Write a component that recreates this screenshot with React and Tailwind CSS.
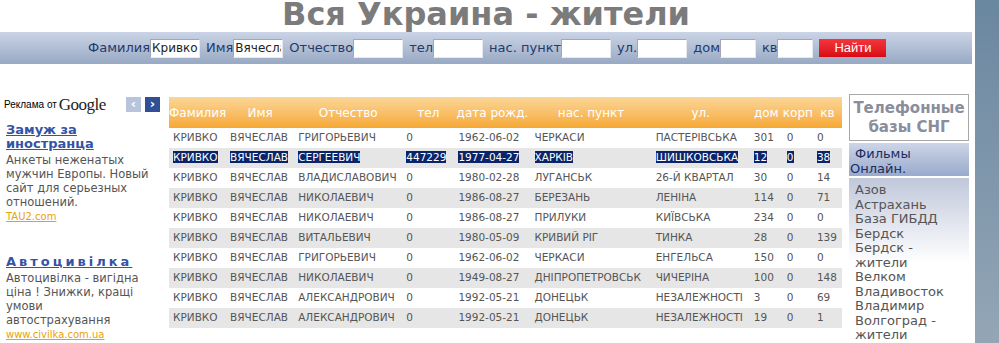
import React from "react";

const rows = [
  ["КРИВКО", "ВЯЧЕСЛАВ", "ГРИГОРЬЕВИЧ", "0", "1962-06-02", "ЧЕРКАСИ", "ПАСТЕРІВСЬКА", "301", "0", "0"],
  ["КРИВКО", "ВЯЧЕСЛАВ", "СЕРГЕЕВИЧ", "447229", "1977-04-27", "ХАРКІВ", "ШИШКОВСЬКА", "12", "0", "38"],
  ["КРИВКО", "ВЯЧЕСЛАВ", "ВЛАДИСЛАВОВИЧ", "0", "1980-02-28", "ЛУГАНСЬК", "26-Й КВАРТАЛ", "30", "0", "14"],
  ["КРИВКО", "ВЯЧЕСЛАВ", "НИКОЛАЕВИЧ", "0", "1986-08-27", "БЕРЕЗАНЬ", "ЛЕНІНА", "114", "0", "71"],
  ["КРИВКО", "ВЯЧЕСЛАВ", "НИКОЛАЕВИЧ", "0", "1986-08-27", "ПРИЛУКИ", "КИЇВСЬКА", "234", "0", "0"],
  ["КРИВКО", "ВЯЧЕСЛАВ", "ВИТАЛЬЕВИЧ", "0", "1980-05-09", "КРИВИЙ РІГ", "ТИНКА", "28", "0", "139"],
  ["КРИВКО", "ВЯЧЕСЛАВ", "ГРИГОРЬЕВИЧ", "0", "1962-06-02", "ЧЕРКАСИ", "ЕНГЕЛЬСА", "150", "0", "0"],
  ["КРИВКО", "ВЯЧЕСЛАВ", "НИКОЛАЕВИЧ", "0", "1949-08-27", "ДНІПРОПЕТРОВСЬК", "ЧИЧЕРІНА", "100", "0", "148"],
  ["КРИВКО", "ВЯЧЕСЛАВ", "АЛЕКСАНДРОВИЧ", "0", "1992-05-21", "ДОНЕЦЬК", "НЕЗАЛЕЖНОСТІ", "3", "0", "69"],
  ["КРИВКО", "ВЯЧЕСЛАВ", "АЛЕКСАНДРОВИЧ", "0", "1992-05-21", "ДОНЕЦЬК", "НЕЗАЛЕЖНОСТІ", "19", "0", "1"],
];

const headers = ["Фамилия", "Имя", "Отчество", "тел", "дата рожд.", "нас. пункт", "ул.", "дом", "корп", "кв"];
const widths = [57, 68, 108, 52, 76, 121, 98, 33, 30, 29];

const cities = [
  "Азов",
  "Астрахань",
  "База ГИБДД",
  "Бердск",
  "Бердск - жители",
  "Велком",
  "Владивосток",
  "Владимир",
  "Волгоград - жители",
];

const Field = ({ label, value = "", w = "w-[50px]" }) => (
  <>
    <span>{label}</span>
    <input
      readOnly
      value={value}
      className={`${w} h-[19px] bg-white border border-t-[#a0a6b4] border-l-[#a0a6b4] border-r-[#e4e8f0] border-b-[#e4e8f0] px-[1px] text-[12px] text-[#222] outline-none mr-[6px]`}
    />
  </>
);

const App = () => {
  return (
    <div className="flex w-[999px] h-[343px] overflow-hidden bg-white font-['DejaVu_Sans',Verdana,sans-serif]">
      <div className="w-[975px] shrink-0 flex flex-col">
        {/* Title */}
        <div className="h-8 shrink-0 w-[972px] overflow-hidden text-center">
          <h1 className="text-[32px] leading-[28px] font-bold text-[#7b7b7b]">Вся Украина - жители</h1>
        </div>

        {/* Search bar */}
        <div className="w-[972px] h-8 shrink-0 bg-gradient-to-b from-[#cbd4e6] to-[#98a9c4] flex items-center pl-[88px] text-[13px] text-[#233a6c]">
          <Field label="Фамилия" value="Кривко" />
          <Field label="Имя" value="Вячеслав" />
          <Field label="Отчество" />
          <Field label="тел" />
          <Field label="нас. пункт" />
          <Field label="ул." />
          <Field label="дом" w="w-[36px]" />
          <Field label="кв" w="w-[36px]" />
          <button className="w-[67px] h-[18px] bg-gradient-to-b from-[#f5343c] to-[#d90812] text-white text-[13px] leading-[18px] font-['Liberation_Sans',Arial,sans-serif]">
            Найти
          </button>
        </div>

        <div className="flex shrink-0 mt-[33px]">
          {/* Ads */}
          <div className="w-[169px] shrink-0 pl-[4px] pr-[6px]">
            <div className="flex items-center h-[15px]">
              <span className="text-[10px] text-black font-['Liberation_Sans',Arial,sans-serif]">Реклама от</span>
              <span className="ml-[2px] text-[17px] leading-[15px] text-[#222] font-['Liberation_Serif',serif] tracking-[-0.5px]">Google</span>
              <span className="ml-auto w-[15px] h-[15px] bg-[#b8c4dc] text-white text-[13px] leading-[14px] text-center font-bold">‹</span>
              <span className="ml-[4px] mr-[3px] w-[15px] h-[15px] bg-[#2f4f96] text-white text-[13px] leading-[14px] text-center font-bold">›</span>
            </div>
            <div className="pl-[2px] mt-[11px] text-[11px] leading-[14px]">
              <a className="block text-[13px] font-bold text-[#3553a6] underline">Замуж за иностранца</a>
              <p className="text-[#555] mt-[2px] text-[11.5px]">Анкеты неженатых мужчин Европы. Новый сайт для серьезных отношений.</p>
              <a className="block text-[10px] leading-[14px] mt-[1px] text-[#e8a10a] underline">TAU2.com</a>

              <a className="block mt-[31px] text-[13px] font-bold text-[#3553a6] underline tracking-[3px]">Автоцивілка</a>
              <p className="text-[#555] mt-[2px] text-[11.5px]">
                Автоцивілка - вигідна ціна ! Знижки, кращі умови
                <br />
                автострахування
              </p>
              <a className="block text-[10px] leading-[14px] mt-[1px] text-[#e8a10a] underline">www.civilka.com.ua</a>
            </div>
          </div>

          {/* Table */}
          <div className="w-[673px] shrink-0">
            <table className="table-fixed w-[673px] border-collapse text-[10.5px] text-[#555]">
              <colgroup>
                {widths.map((w, i) => (
                  <col key={i} style={{ width: w }} />
                ))}
              </colgroup>
              <thead>
                <tr className="h-[31px] bg-gradient-to-b from-[#fbd796] to-[#f6a830]">
                  {headers.map((h) => (
                    <th key={h} className="font-normal text-white text-[12px] text-center whitespace-nowrap p-0">
                      {h}
                    </th>
                  ))}
                </tr>
              </thead>
              <tbody>
                {rows.map((r, i) => (
                  <tr key={i} className={`h-[20px] ${i % 2 === 1 ? "bg-[#e6e6e6]" : "bg-white"}`}>
                    {r.map((c, j) => (
                      <td key={j} className="pl-[4px] p-0 whitespace-nowrap overflow-visible">
                        {i === 1 ? <span className="bg-[#0a246a] text-white">{c}</span> : c}
                      </td>
                    ))}
                  </tr>
                ))}
              </tbody>
            </table>
          </div>

          {/* Right sidebar */}
          <div className="w-[120px] ml-[7px] shrink-0 -mt-[3px]">
            <div className="h-[47px] border border-[#a8a8a8] flex items-center justify-center text-center text-[15px] leading-[19px] font-bold text-[#8a8e9c]">
              Телефонные базы СНГ
            </div>
            <div className="mt-[2px] h-[33px] bg-gradient-to-b from-[#cdd5e8] to-[#99aacb] text-[13px] leading-[15px] text-[#1b2c5e] pl-[1px] pt-[3px] indent-[5px]">
              Фильмы Онлайн.
            </div>
            <div className="mt-[2px] h-[170px] bg-gradient-to-b from-[#c0c8da] via-white to-white pl-[6px] pr-[12px] pt-[5px] text-[13px] leading-[14.5px] text-[#555]">
              {cities.map((c) => (
                <div key={c}>{c}</div>
              ))}
            </div>
          </div>
        </div>
      </div>

      {/* Right strip */}
      <div className="flex-1 bg-gradient-to-b from-[#6a87a0] to-[#94a6b6]" />
    </div>
  );
};

export default App;
